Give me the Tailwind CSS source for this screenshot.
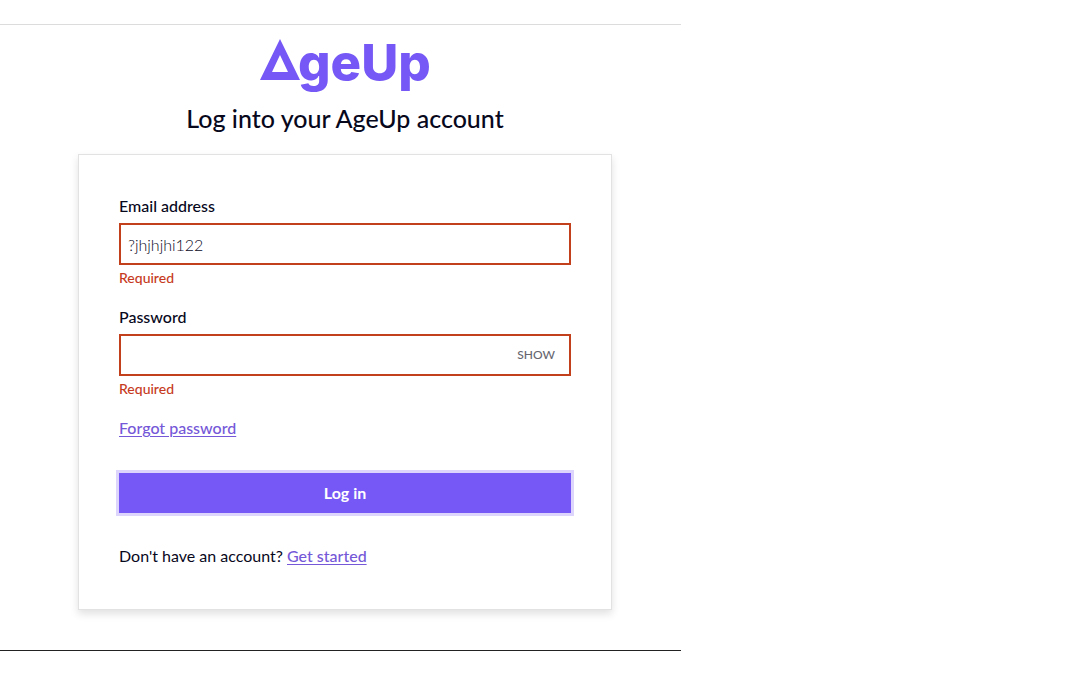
<!DOCTYPE html>
<html lang="en">
<head>
<meta charset="utf-8">
<meta name="viewport" content="width=device-width, initial-scale=1">
<title>AgeUp – Log in</title>
<script src="https://cdn.jsdelivr.net/npm/@tailwindcss/browser@4"></script>
</head>
<body class="min-h-screen bg-white font-['Lato',sans-serif] text-base text-[#08081c]">
<div class="w-[63%]">
  <main class="mt-6 flex flex-col items-center border-y border-t-[#dcdcdc] border-b-[#222222] pt-2 pb-10 pl-[9px]">
    <svg class="h-[67px] w-[172px] overflow-visible" viewBox="0 0 172 67" role="img" aria-label="AgeUp">
      <path d="M21 6 41 47H1ZM21 22 13 39H29Z" fill="#7558f5" fill-rule="evenodd"/>
      <text x="39" y="48" font-family="Inter" font-size="51" font-weight="800" fill="#7558f5">geUp</text>
    </svg>
    <h1 class="text-center text-[25px] leading-9 font-medium">Log into your AgeUp account</h1>
    <form class="mt-[18px] flex w-full max-w-[534px] flex-col border border-[#e2e2e2] p-10 shadow-[0_4px_8px_rgba(0,0,0,0.12)]" onsubmit="return false">
      <label for="email" class="leading-[22px] font-medium">Email address</label>
      <input id="email" type="text" value="?jhjhjhi122" class="mt-1.5 h-[42px] w-full border-2 border-[#c2401c] px-[7px] font-light outline-none">
      <p class="mt-0.5 text-sm leading-[21px] font-medium text-[#c63a22]">Required</p>
      <label for="password" class="mt-[18px] leading-[22px] font-medium">Password</label>
      <div class="mt-1.5 flex h-[42px] items-center border-2 border-[#c2401c]">
        <input id="password" type="password" class="h-full min-w-0 flex-1 px-[7px] outline-none">
        <button type="button" class="px-[14px] text-xs leading-5 font-medium text-[#666670]">SHOW</button>
      </div>
      <p class="mt-0.5 text-sm leading-[21px] font-medium text-[#c63a22]">Required</p>
      <a href="#" class="mt-[18px] self-start leading-[22px] font-medium text-[#7558d8] underline underline-offset-2">Forgot password</a>
      <button type="submit" class="mt-[34px] h-10 bg-[#7558f5] font-bold text-white ring-3 ring-[#ddd5fc]">Log in</button>
      <p class="mt-8 mb-0.5 leading-[22px]">Don't have an account? <a href="#" class="font-medium text-[#7558d8] underline underline-offset-2">Get started</a></p>
    </form>
  </main>
</div>
</body>
</html>
